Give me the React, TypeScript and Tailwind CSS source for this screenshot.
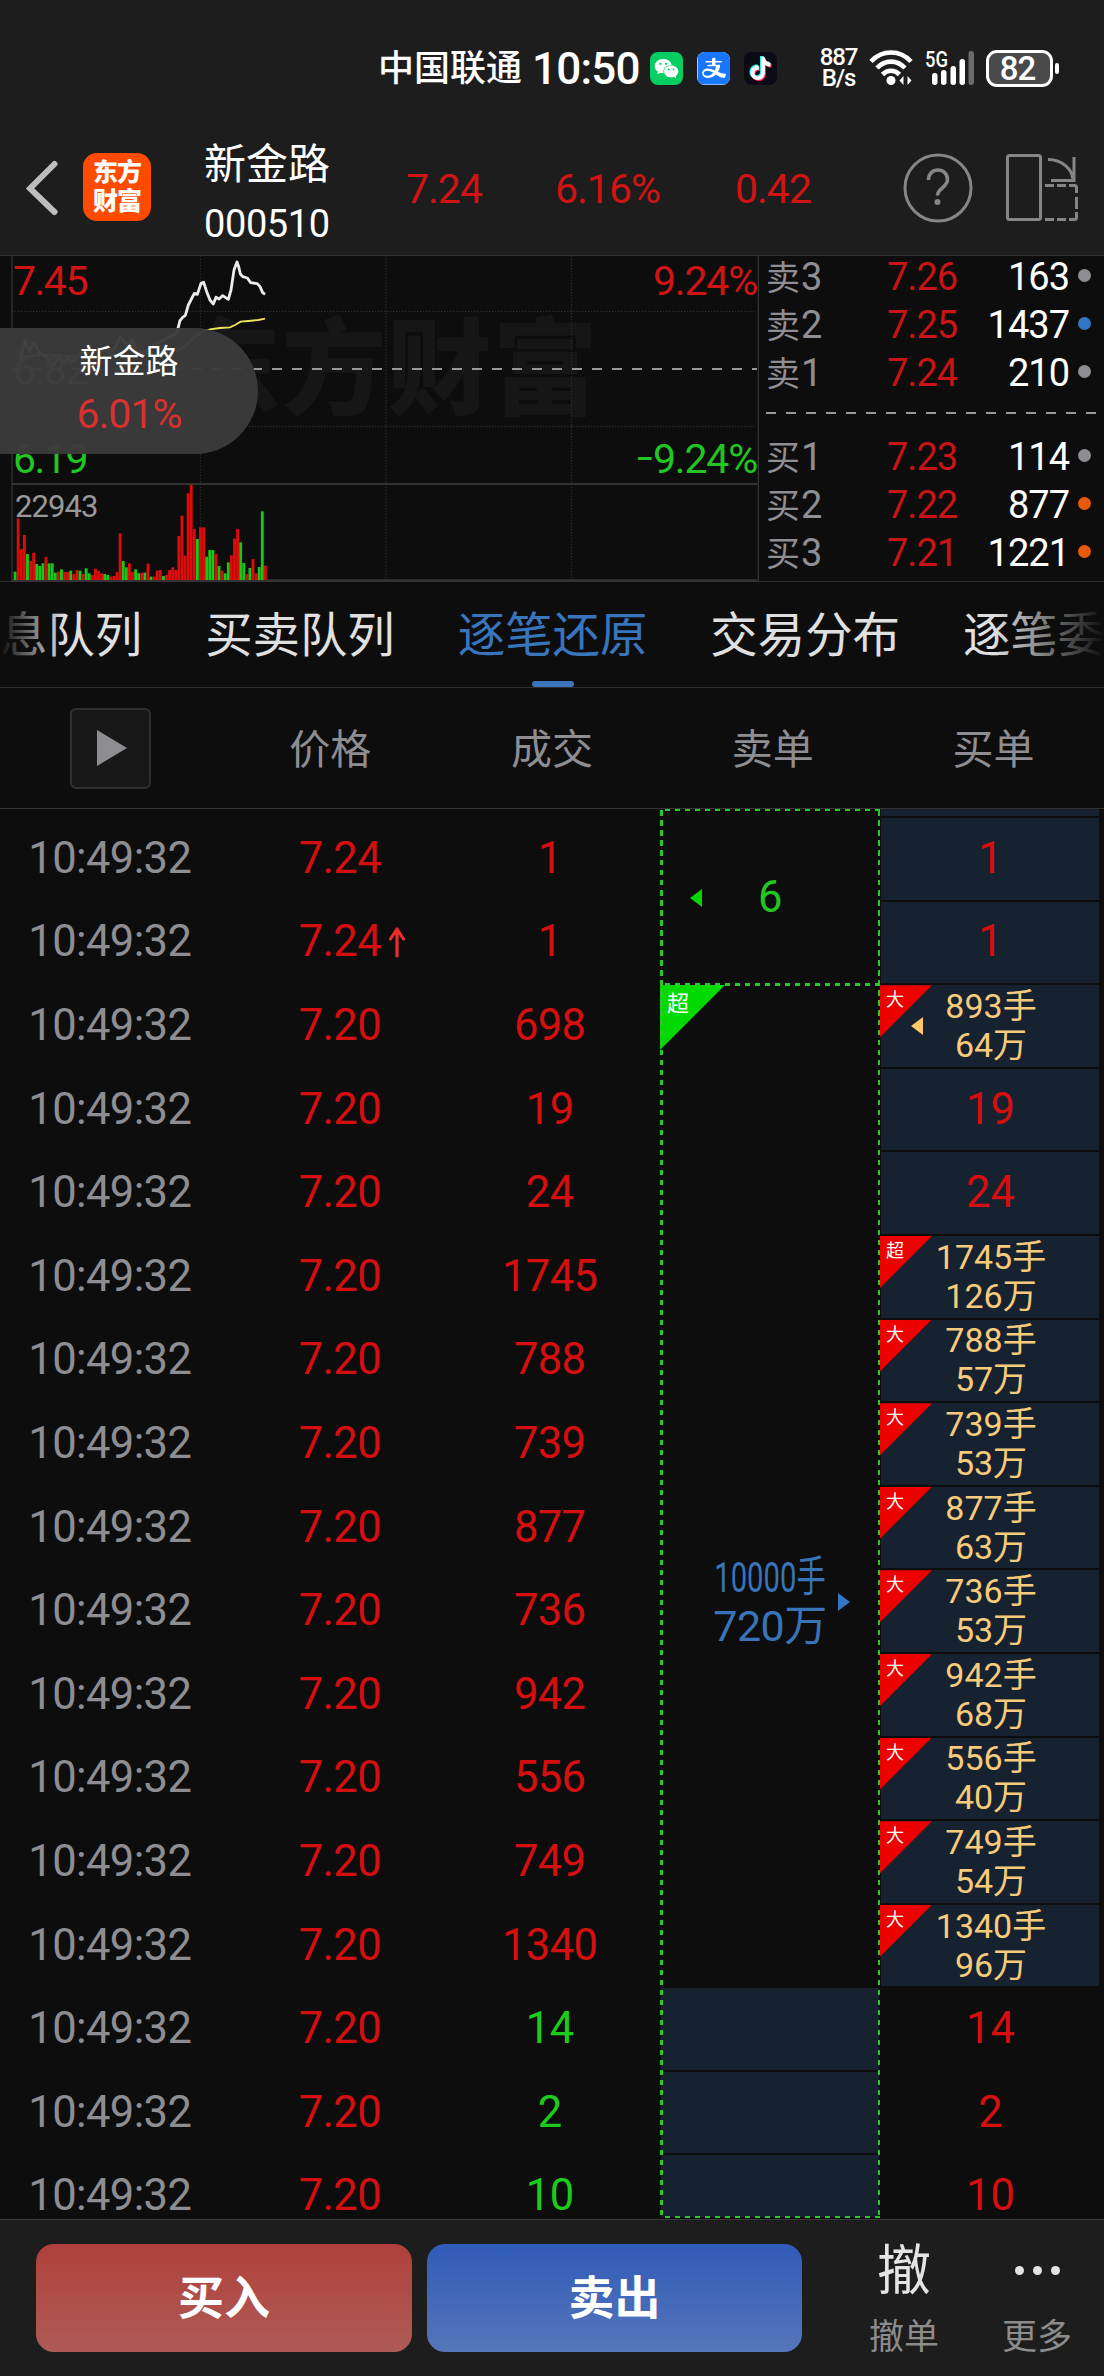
import { AiFillAlipaySquare, AiFillWechat } from "react-icons/ai";
import { SiTiktok } from "react-icons/si";
import clsx from "clsx";

type Side = "r" | "g";

// Volume bars, "<side><height>" in chart units
const VOLUME =
  "g25 r185 r93 r135 g78 r57 r82 g48 g42 g50 r69 g50 g50 g22 r25 g32 r24 r24 g28 r18 r30 g28 r18 g35 g20 r15 r34 r27 r20 g18 g15 r10 r12 r24 r140 g57 g38 r50 r24 g32 g20 r22 g22 r49 g10 r10 r28 r30 g12 r15 r30 r38 r30 r132 r193 r73 r260 r285 r153 g123 r158 r158 g70 g90 g90 r78 g42 r28 g20 g53 r74 r124 r153 g113 g51 r18 g36 r63 r20 g39 g206 r43";

const PRICE_LINE =
  "54,350 60,335 75,272 88,305 100,278 120,310 135,318 150,335 160,345 180,320 190,340 205,320 220,335 240,310 270,305 300,300 330,305 345,295 360,260 372,275 385,290 395,270 410,300 430,310 455,290 480,275 500,265 515,258 530,250 540,212 548,202 556,196 565,165 583,130 592,133 603,100 611,97 620,125 630,150 640,162 648,142 657,147 668,137 685,148 693,120 702,60 711,36 716,50 721,72 728,80 742,84 752,98 772,101 780,110 788,128 795,133";

const AVG_LINE =
  "60,345 80,322 120,314 200,317 300,318 400,314 480,310 530,304 556,290 580,264 610,244 630,238 660,234 690,232 705,225 722,215 745,213 775,210 795,206";

const asks = [
  { label: "卖3", price: "7.26", volume: "163", dot: "bg-[#8e8e93]" },
  { label: "卖2", price: "7.25", volume: "1437", dot: "bg-[#3277c4]" },
  { label: "卖1", price: "7.24", volume: "210", dot: "bg-[#8e8e93]" },
];

const bids = [
  { label: "买1", price: "7.23", volume: "114", dot: "bg-[#8e8e93]" },
  { label: "买2", price: "7.22", volume: "877", dot: "bg-[#e85a0c]" },
  { label: "买3", price: "7.21", volume: "1221", dot: "bg-[#e85a0c]" },
];

interface Trade {
  price: string;
  volume: string;
  side: Side;
  up?: boolean;
  amount?: string;
  tag?: string;
  marker?: boolean;
}

const trades: Trade[] = [
  { price: "7.24", volume: "1", side: "r" },
  { price: "7.24", volume: "1", side: "r", up: true },
  { price: "7.20", volume: "698", side: "r", amount: "893手 64万", tag: "大", marker: true },
  { price: "7.20", volume: "19", side: "r" },
  { price: "7.20", volume: "24", side: "r" },
  { price: "7.20", volume: "1745", side: "r", amount: "1745手 126万", tag: "超" },
  { price: "7.20", volume: "788", side: "r", amount: "788手 57万", tag: "大" },
  { price: "7.20", volume: "739", side: "r", amount: "739手 53万", tag: "大" },
  { price: "7.20", volume: "877", side: "r", amount: "877手 63万", tag: "大" },
  { price: "7.20", volume: "736", side: "r", amount: "736手 53万", tag: "大" },
  { price: "7.20", volume: "942", side: "r", amount: "942手 68万", tag: "大" },
  { price: "7.20", volume: "556", side: "r", amount: "556手 40万", tag: "大" },
  { price: "7.20", volume: "749", side: "r", amount: "749手 54万", tag: "大" },
  { price: "7.20", volume: "1340", side: "r", amount: "1340手 96万", tag: "大" },
  { price: "7.20", volume: "14", side: "g" },
  { price: "7.20", volume: "2", side: "g" },
  { price: "7.20", volume: "10", side: "g" },
];

function StatusBar() {
  return (
    <div className="flex h-[136px] items-center pl-[378px] text-white">
      <span className="w-[154px] pt-[2px] text-[36px] font-medium leading-none">中国联通</span>
      <span className="w-[118px] pt-[2px] text-[44px] font-medium leading-none tracking-[-0.8px]">10:50</span>
      <div className="flex gap-[14px]">
        <span className="flex size-[33px] items-center justify-center rounded-[8px] bg-[#07ce63]">
          <AiFillWechat size={27} />
        </span>
        <span className="flex size-[33px] items-center justify-center overflow-hidden rounded-[8px] bg-white">
          <AiFillAlipaySquare size={42} className="shrink-0 text-[#1977fd]" />
        </span>
        <span className="relative size-[33px] rounded-[8px] bg-[#0a0b14]">
          <SiTiktok size={23} className="absolute left-[4px] top-[4px] text-[#25f4ee]" />
          <SiTiktok size={23} className="absolute left-[6px] top-[6px] text-[#fe2c55]" />
          <SiTiktok size={23} className="absolute left-[5px] top-[5px]" />
        </span>
      </div>
      <span className="ml-[43px] flex w-[37px] flex-col items-center text-[24px] font-medium leading-[21px] tracking-[-1.2px]">
        <span>887</span>
        <span>B/s</span>
      </span>
      <svg className="ml-[12px]" width="46" height="36" viewBox="0 0 46 36" fill="none" stroke="#fff" strokeWidth="4.6">
        <path d="M2 11.5C13-.5 31-.5 42 11.5" />
        <path d="M8 18c8-8.5 20-8.5 28 0" />
        <path d="M13.500 24.500c5-5 12-5 17 0" />
        <circle cx="22" cy="30.500" r="4.500" fill="#fff" stroke="none" />
        <path d="M34.500 26v9l-4-4.500zM38.500 35v-9l4 4.500z" fill="#fff" stroke="none" />
      </svg>
      <svg className="ml-[10px] overflow-visible" width="52" height="36" viewBox="0 0 52 36">
        <text x="0" y="16.500" fill="#fff" fontSize="22" fontWeight="500" textLength="23" lengthAdjust="spacingAndGlyphs">5G</text>
        <rect x="7" y="23" width="5.500" height="12" rx="2.700" fill="#fff" />
        <rect x="16" y="20" width="5.500" height="15" rx="2.700" fill="#fff" />
        <rect x="25.500" y="16" width="5.500" height="19" rx="2.700" fill="#fff" />
        <rect x="34.500" y="9" width="5.500" height="26" rx="2.700" fill="#fff" />
        <rect x="43.500" y="1" width="5.500" height="34" rx="2.700" fill="#6b6b6b" />
      </svg>
      <span className="ml-[9px] flex h-[37px] w-[67px] items-center justify-center rounded-[11px] border-[3px] border-white bg-[#4a4a4a] pr-1 text-[33px] font-medium leading-none tracking-[-1px]">
        82
      </span>
      <span className="ml-[2px] h-[11px] w-[4px] rounded-full bg-white" />
    </div>
  );
}

function Header() {
  return (
    <div className="flex h-[119px] items-start text-[41px] leading-[48px] tracking-[-1px] text-[#d01414]">
      <svg className="ml-[26px] mt-[23px]" width="34" height="58" viewBox="0 0 34 58" fill="none" stroke="#bdbdbd" strokeWidth="6" strokeLinecap="round">
        <path d="M28.500 5 4 29.500l24.500 23.500" />
      </svg>
      <div className="ml-[23px] mt-[17px] flex size-[68px] flex-col items-center justify-center rounded-[14px] bg-[#ff4b00] text-[25px] font-black leading-[29px] tracking-[-1px] text-white">
        <span>东方</span>
        <span>财富</span>
      </div>
      <div className="ml-[53px] mt-[5px] w-[202px] text-white">
        <div className="text-[42px] tracking-normal">新金路</div>
        <div className="mt-[11px] text-[38px] tracking-[-0.4px]">000510</div>
      </div>
      <span className="mt-[29px] w-[149px]">7.24</span>
      <span className="mt-[29px] w-[180px]">6.16%</span>
      <span className="mt-[29px] w-[168px]">0.42</span>
      <svg className="mt-[17px]" width="70" height="70" viewBox="0 0 70 70" fill="none" stroke="#868686" strokeWidth="3">
        <circle cx="35" cy="35" r="33" />
        <path d="M25.500 27c0-6 4-10 9.500-10s9.500 4 9.500 9.500c0 8-10 8.500-10 16" strokeWidth="3.600" />
        <circle cx="34.500" cy="49" r="3" fill="#868686" stroke="none" />
      </svg>
      <svg className="ml-[33px] mt-[18px]" width="74" height="68" viewBox="0 0 74 68" fill="none" stroke="#868686" strokeWidth="3">
        <rect x="1.500" y="1.500" width="33" height="64" rx="2" />
        <path d="M42 5.500c14 0 24.500 10 24.500 19M68 3v23.500H45" />
        <path d="M39 31.500h9M51 31.500h9M63 31.500h5.500q2 0 2 2V39M70.500 43v12M70.500 58v5.500q0 2-2 2H63M60 65.500h-9M48 65.500h-9" />
      </svg>
    </div>
  );
}

function MinuteChart() {
  return (
    <div className="relative h-[326px] w-[759px] text-[41px] leading-none tracking-[-1.500px]">
      {/* 3 units per pixel */}
      <svg width="759" height="326" viewBox="0 18 2277 978" fill="none">
        <text x="528" y="468" fill="#161616" fontSize="314" fontWeight="900" letterSpacing="3">东方财富</text>
        <g stroke="#333" strokeWidth="3" strokeDasharray="4 5">
          <path d="M601 18V990M1158 18V990M1715 18V990M36 184H2268M36 529H2268" />
        </g>
        <path d="M36 357H2271" stroke="#999" strokeWidth="6" strokeDasharray="30 30" />
        <path d="M36 18V996M2275 18V996" stroke="#333" strokeWidth="4" />
        <path d="M36 702H2271" stroke="#333" strokeWidth="6" />
        <path d="M36 992H2271" stroke="#333" strokeWidth="8" />
        {VOLUME.split(" ").map((bar, i) => {
          const h = Number(bar.slice(1));
          return <rect key={i} x={41 + i * 9.27} y={990 - h} width="8.6" height={h} fill={bar[0] === "r" ? "#e00a0a" : "#18c818"} />;
        })}
        <polyline points={AVG_LINE} stroke="#f0e55a" strokeWidth="5.500" />
        <polyline points={PRICE_LINE} stroke="#ececec" strokeWidth="8.500" strokeLinejoin="round" />
      </svg>
      <span className="absolute left-[13px] top-[5px] text-[#d01414]">7.45</span>
      <span className="absolute left-[13px] top-[94px] text-[#999]">6.82</span>
      <span className="absolute left-[13px] top-[183px] text-[#22c522]">6.19</span>
      <span className="absolute right-[2px] top-[5px] tracking-[-1.2px] text-[#d01414]">9.24%</span>
      <span className="absolute right-[2px] top-[183px] flex tracking-[-1.2px] text-[#22c522]">
        <span className="inline-block origin-right scale-x-80">−</span>9.24%
      </span>
      <span className="absolute left-[15px] top-[235px] text-[31px] tracking-[-0.9px] text-[#999]">22943</span>
      <div className="absolute left-0 top-[72px] flex h-[126px] w-[258px] flex-col items-center rounded-r-full bg-[#3b3b3b]/97 pt-[11px] leading-[48px] tracking-normal">
        <span className="text-[33px] leading-[46px] text-white">新金路</span>
        <span className="mt-[5px] text-[41px] tracking-[-1px] text-[#d93030]">6.01%</span>
      </div>
    </div>
  );
}

function Quote({ label, price, volume, dot }: (typeof asks)[number]) {
  return (
    <div className="flex h-[48px] items-center text-[38px] leading-[48px] tracking-[-1px]">
      <span className="w-[121px] text-[#8e8e93]">
        <span className="text-[34px] tracking-[1px]">{label[0]}</span>
        {label[1]}
      </span>
      <span className="text-[#c81414]">{price}</span>
      <span className="flex-1 text-right text-white">{volume}</span>
      <span className={clsx("mb-1 ml-[9px] mr-[13px] size-[13px] rounded-full", dot)} />
    </div>
  );
}

function OrderBook() {
  return (
    <div className="flex-1 pl-[7px]">
      <div className="-mt-[3px]">
        {asks.map((q) => <Quote key={q.label} {...q} />)}
      </div>
      <div className="mb-[19px] mt-[15px] h-[2px] bg-[repeating-linear-gradient(90deg,#999_0_10px,transparent_10px_20px)]" />
      {bids.map((q) => <Quote key={q.label} {...q} />)}
    </div>
  );
}

function Tabs() {
  const tabs = ["息队列", "买卖队列", "逐笔还原", "交易分布", "逐笔委"];
  return (
    <div className="relative flex h-[106px] gap-[63px] overflow-hidden border-b border-[#2e2e2e] text-[47.4px] leading-[108px] text-[#e0e0e0]">
      {tabs.map((tab) => (
        <div key={tab} className={clsx("relative h-[105px] shrink-0 whitespace-nowrap", tab === "逐笔还原" && "text-[#3975bd]")}>
          {tab}
          {tab === "逐笔还原" && (
            <span className="absolute bottom-0 left-1/2 h-[6px] w-[42px] -translate-x-1/2 rounded-full bg-[#3a75bd]" />
          )}
        </div>
      ))}
      <div className="absolute left-0 top-0 h-[100px] w-[64px] bg-linear-to-r from-[#0d0d0d] to-transparent" />
      <div className="absolute right-0 top-0 h-[100px] w-[110px] bg-linear-to-l from-[#0d0d0d] to-transparent" />
    </div>
  );
}

function TableHead() {
  return (
    <div className="grid h-[121px] grid-cols-5 items-center border-b border-[#333] text-center text-[41px] leading-[48px] text-[#8e8e92]">
      <div className="mx-auto flex size-[81px] items-center justify-center rounded-[6px] border-2 border-[#303030] bg-[#181818]">
        <svg width="30" height="36" viewBox="0 0 30 36" className="ml-1">
          <path d="M0 0 30 18 0 36z" fill="#8e8e92" />
        </svg>
      </div>
      <span className="pr-[2px] pt-[4px]">价格</span>
      <span className="pt-[4px]">成交</span>
      <span className="pt-[4px]">卖单</span>
      <span className="pt-[4px]">买单</span>
    </div>
  );
}

function TradeRow({ price, volume, side, up }: Trade) {
  return (
    <div className="flex h-[83.6px] shrink-0 items-center text-[43.5px] leading-[46px] tracking-[-0.6px]">
      <span className="w-[221px] pr-[1px] text-center text-[#8e8e92]">10:49:32</span>
      <span className="flex w-[219px] items-center pl-[78px] text-[#d50f0f]">
        {price}
        {up && (
          <svg className="ml-[8px]" width="16" height="32" viewBox="0 0 16 32" fill="none" stroke="#ea2c2c" strokeWidth="3.200">
            <path d="M8 30V3M1.500 13 8 3l6.500 10" strokeLinecap="round" strokeLinejoin="round" />
          </svg>
        )}
      </span>
      <span className={clsx("w-[221px] text-center", side === "r" ? "text-[#d50f0f]" : "text-[#1ccc1c]")}>{volume}</span>
    </div>
  );
}

function Corner({ text, big }: { text: string; big?: boolean }) {
  return big ? (
    <div className="absolute left-0 top-[1px] size-[65px] bg-[#00da00] pl-[7px] pt-[8px] text-[22px] leading-[22px] text-white [clip-path:polygon(0_0,100%_0,0_100%)]">
      {text}
    </div>
  ) : (
    <div className="absolute -left-[1px] top-0 size-[52px] bg-[#ec0000] pl-[6px] pt-[6px] text-[18px] leading-[18px] text-white [clip-path:polygon(0_0,100%_0,0_100%)]">
      {text}
    </div>
  );
}

function BuyCell({ volume, side, amount, tag, marker }: Trade) {
  return (
    <div
      className={clsx(
        "relative flex h-[83.6px] shrink-0 items-center justify-center border-t-2 border-[#0d0d0d] text-[43.5px] leading-[46px] text-[#d50f0f]",
        side === "r" && "bg-[#162230]"
      )}
    >
      {tag && <Corner text={tag} />}
      {marker && (
        <svg className="absolute left-[30px] top-[32px]" width="12" height="18" viewBox="0 0 12 18">
          <path d="M12 0v18L0 9z" fill="#fec769" />
        </svg>
      )}
      {amount ? (
        <div className="pl-[2px] text-center text-[34px] leading-[39px] text-[#f8cb7c]">
          {amount.split(" ").map((line) => <div key={line}>{line}</div>)}
        </div>
      ) : (
        <span className="pl-[1px]">{volume}</span>
      )}
    </div>
  );
}

function DashX({ className }: { className?: string }) {
  return <div className={clsx("absolute left-0 right-0 bg-[repeating-linear-gradient(90deg,transparent_0_5px,#28c928_5px_10px)]", className)} />;
}

function DashY({ className }: { className?: string }) {
  return <div className={clsx("absolute bottom-0 top-0 w-[2.5px] bg-[repeating-linear-gradient(180deg,transparent_0_1px,#28c928_1px_6.5px,transparent_6.5px_10px)]", className)} />;
}

function SellColumn() {
  return (
    <div className="relative flex w-[220px] flex-col">
      <div className="relative flex h-[175px] items-center pl-[30px] pt-[2px] text-[43.5px] leading-[46px] text-[#22c722]">
        <svg width="12" height="18" viewBox="0 0 12 18">
          <path d="M12 0v18L0 9z" fill="#05d505" />
        </svg>
        <span className="ml-[56px]">6</span>
      </div>
      <div className="relative flex-1">
        <Corner text="超" big />
        <div className="h-[1004px]" />
        <div className="flex flex-col gap-[2px] px-[1px]">
          <div className="h-[81.6px] bg-[#162230]" />
          <div className="h-[81.6px] bg-[#162230]" />
          <div className="h-[62px] bg-[#162230]" />
        </div>
        <div className="absolute inset-0 flex items-center justify-center pt-[1px] text-[43px] leading-[49px] text-[#3a74b8]">
          <div className="flex w-[110px] flex-col items-center whitespace-nowrap">
            <span className="scale-x-[0.68]">10000手</span>
            <span className="tracking-[-0.500px]">720万</span>
          </div>
          <svg className="absolute left-[178px] top-[609px]" width="12" height="18" viewBox="0 0 12 18">
            <path d="M0 0v18L12 9z" fill="#3277c4" />
          </svg>
        </div>
      </div>
      <DashX className="top-0 h-[2px]" />
      <DashX className="top-[174px] h-[3px]" />
      <DashX className="bottom-px h-[2px]" />
      <DashY className="left-0" />
      <DashY className="right-0" />
    </div>
  );
}

function Footer() {
  return (
    <div className="flex h-[157px] items-start border-t border-[#3a3a3a] bg-[#1d1d1d] pl-[36px] pt-[24px]">
      <button className="h-[108px] w-[376px] rounded-[18px] bg-linear-to-b from-[#b0403b] to-[#ae5a55] text-[46px] font-bold text-white">
        买入
      </button>
      <button className="ml-[15px] h-[108px] w-[375px] rounded-[18px] bg-linear-to-b from-[#305bb8] to-[#5675ba] text-[46px] font-bold text-white">
        卖出
      </button>
      <div className="ml-[52px] w-[100px] text-center text-[35px] text-[#8c8c8c]">
        <div className="h-[70px] pt-[1px] text-[54px] leading-[54px] text-[#e4e4e4]">撤</div>
        <div className="leading-[48px]">撤单</div>
      </div>
      <div className="ml-[33px] w-[100px] text-center text-[35px] text-[#8c8c8c]">
        <div className="flex h-[70px] justify-center gap-[9px] pt-[22px]">
          <span className="size-[9px] rounded-full bg-[#e4e4e4]" />
          <span className="size-[9px] rounded-full bg-[#e4e4e4]" />
          <span className="size-[9px] rounded-full bg-[#e4e4e4]" />
        </div>
        <div className="leading-[48px]">更多</div>
      </div>
    </div>
  );
}

export default function App() {
  return (
    <div className="flex h-[2376px] w-[1104px] flex-col overflow-hidden bg-[#0d0d0d] font-[Roboto,'Noto_Sans_CJK_SC',sans-serif]">
      <div className="border-b border-[#333] bg-[#1d1d1d]">
        <StatusBar />
        <Header />
      </div>

      <div className="flex h-[326px] border-b border-[#2e2e2e]">
        <MinuteChart />
        <OrderBook />
      </div>

      <Tabs />
      <TableHead />

      <div className="flex h-[1410px] overflow-hidden">
        <div className="flex w-[660px] flex-col pt-[8px]">
          {trades.map((t, i) => <TradeRow key={i} {...t} />)}
        </div>
        <SellColumn />
        <div className="ml-px flex w-[218px] flex-col">
          <div className="h-[7px] shrink-0 bg-[#162230]" />
          {trades.map((t, i) => <BuyCell key={i} {...t} />)}
        </div>
      </div>

      <Footer />
    </div>
  );
}
